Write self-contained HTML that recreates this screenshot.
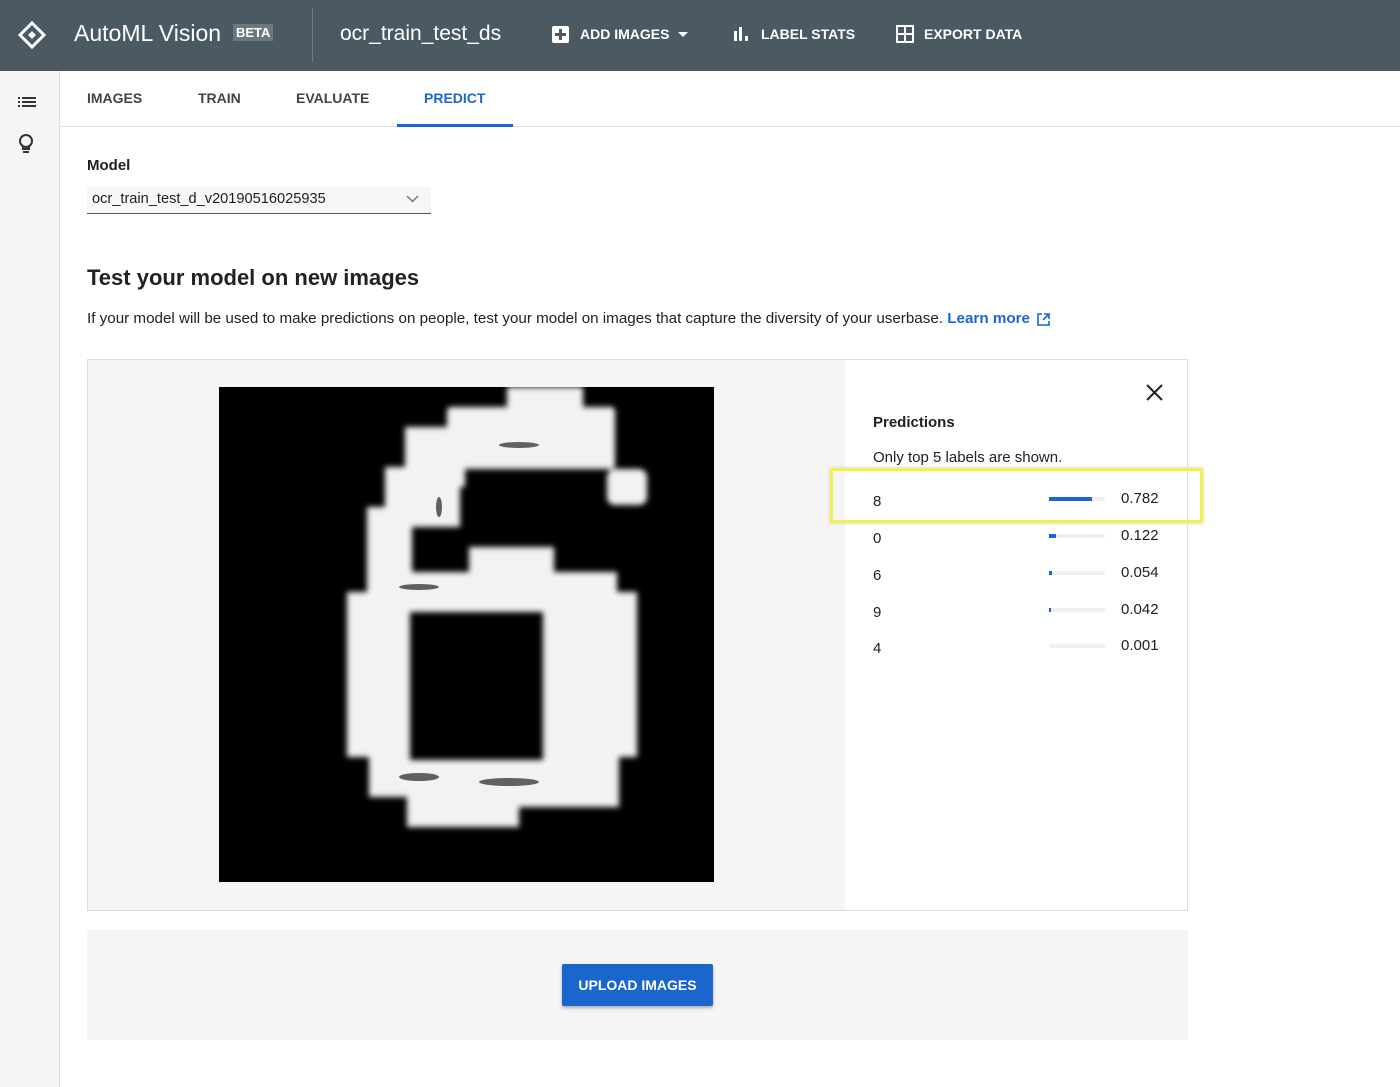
<!DOCTYPE html>
<html><head><meta charset="utf-8"><style>
*{margin:0;padding:0;box-sizing:border-box}
body{width:1400px;height:1087px;position:relative;background:#fff;font-family:"Liberation Sans",Arial,sans-serif;color:#212121;overflow:hidden}
.hdr{position:absolute;left:0;top:0;width:1400px;height:71px;background:#4b5962}
.hdr .t{position:absolute;color:#fff;white-space:nowrap}
.side{position:absolute;left:0;top:71px;width:60px;height:1016px;background:#f5f5f5;border-right:1px solid #e0e0e0}
.tabs{position:absolute;left:60px;top:71px;right:0;height:56px;border-bottom:1px solid #e0e0e0}
.tab{position:absolute;top:19px;font-size:14px;font-weight:bold;color:#444}
.abs{position:absolute;white-space:nowrap}
.row{position:absolute;left:873px;font-size:15px}
.bar{position:absolute;left:1049px;width:56px;height:4px;background:#f0f0f0}
.bar i{display:block;height:4px;background:#1a66cc}
.v{position:absolute;left:1121px;font-size:15px}
</style></head><body>
<div class="hdr">
 <svg style="position:absolute;left:17px;top:20px" width="30" height="30" viewBox="0 0 30 30"><path d="M15 3 L27 15 L15 27 L3 15 Z" fill="none" stroke="#fff" stroke-width="3"/><path d="M15 11 L19 15 L15 19 L11 15Z" fill="#fff"/></svg>
 <div class="t" style="left:74px;top:20px;font-size:23px">AutoML Vision</div>
 <div class="t" style="left:233px;top:24px;font-size:13px;font-weight:bold;background:#6b7880;padding:1px 3px">BETA</div>
 <div style="position:absolute;left:312px;top:8px;width:1px;height:54px;background:#6c7a82"></div>
 <div class="t" style="left:340px;top:22px;font-size:21px">ocr_train_test_ds</div>
 <div style="position:absolute;left:552px;top:26px;width:17px;height:17px;background:#fff;border-radius:2px"><div style="position:absolute;left:7px;top:3px;width:3px;height:11px;background:#4b5962"></div><div style="position:absolute;left:3px;top:7px;width:11px;height:3px;background:#4b5962"></div></div>
 <div class="t" style="left:580px;top:26px;font-size:14px;font-weight:bold">ADD IMAGES</div>
 <div style="position:absolute;left:678px;top:32px;border-left:5px solid transparent;border-right:5px solid transparent;border-top:5px solid #fff"></div>
 <div style="position:absolute;left:734px;top:31px;width:3px;height:10px;background:#fff"></div>
 <div style="position:absolute;left:739px;top:27px;width:3px;height:14px;background:#fff"></div>
 <div style="position:absolute;left:745px;top:36px;width:3px;height:5px;background:#fff"></div>
 <div class="t" style="left:761px;top:26px;font-size:14px;font-weight:bold">LABEL STATS</div>
 <svg style="position:absolute;left:896px;top:25px" width="18" height="18"><rect x="1" y="1" width="16" height="16" fill="none" stroke="#fff" stroke-width="2"/><path d="M9 1V17M1 9H17" stroke="#fff" stroke-width="2"/></svg>
 <div class="t" style="left:924px;top:26px;font-size:14px;font-weight:bold">EXPORT DATA</div>
</div>
<div class="side">
 <svg style="position:absolute;left:18px;top:25px" width="18" height="14"><g fill="#333"><rect x="0" y="1" width="2" height="2"/><rect x="4" y="1" width="14" height="2"/><rect x="0" y="5" width="2" height="2"/><rect x="4" y="5" width="14" height="2"/><rect x="0" y="9" width="2" height="2"/><rect x="4" y="9" width="14" height="2"/></g></svg>
 <svg style="position:absolute;left:18px;top:63px" width="16" height="22"><circle cx="8" cy="7" r="6" fill="none" stroke="#333" stroke-width="2"/><path d="M5 12V15H11V12" fill="none" stroke="#333" stroke-width="2"/><rect x="5" y="17" width="6" height="2" fill="#333"/></svg>
</div>
<div class="tabs">
 <div class="tab" style="left:27px">IMAGES</div>
 <div class="tab" style="left:138px">TRAIN</div>
 <div class="tab" style="left:236px">EVALUATE</div>
 <div class="tab" style="left:364px;color:#1a66cc">PREDICT</div>
 <div style="position:absolute;left:337px;top:53px;width:116px;height:3px;background:#1a66cc"></div>
</div>
<div class="abs" style="left:87px;top:157px;font-size:15px;font-weight:bold">Model</div>
<div class="abs" style="left:87px;top:187px;width:344px;height:27px;background:#f7f7f7;border-bottom:1px solid #555"></div>
<div class="abs" style="left:92px;top:191px;font-size:14.6px">ocr_train_test_d_v20190516025935</div>
<svg style="position:absolute;left:406px;top:195px" width="13" height="8"><path d="M1 1L6.5 6.5L12 1" fill="none" stroke="#777" stroke-width="1.5"/></svg>
<div class="abs" style="left:87px;top:265px;font-size:22px;font-weight:bold;color:#222">Test your model on new images</div>
<div class="abs" style="left:87px;top:310px;font-size:15.2px">If your model will be used to make predictions on people, test your model on images that capture the diversity of your userbase. <span style="color:#1a66cc;font-weight:bold">Learn more</span></div>
<svg style="position:absolute;left:1037px;top:313px" width="13" height="13"><path d="M5 1H1V12H12V8" fill="none" stroke="#1a66cc" stroke-width="1.6"/><path d="M7 1H12V6M12 1L6 7" fill="none" stroke="#1a66cc" stroke-width="1.6"/></svg>
<div class="abs" style="left:87px;top:359px;width:1101px;height:552px;border:1px solid #ddd;background:#f5f5f5"></div>
<div class="abs" style="left:845px;top:360px;width:342px;height:550px;background:#fff"></div>
<svg style="position:absolute;left:219px;top:387px" width="495" height="495">
 <defs><filter id="b"><feGaussianBlur stdDeviation="3"/></filter></defs>
 <rect width="495" height="495" fill="#000"/>
 <g fill="#f2f2f2" filter="url(#b)">
  <rect x="288" y="0" width="76" height="22"/>
  <rect x="228" y="20" width="168" height="62" rx="4"/>
  <rect x="186" y="40" width="60" height="60"/>
  <rect x="166" y="80" width="75" height="60"/>
  <rect x="148" y="120" width="45" height="80"/>
  <rect x="388" y="82" width="40" height="36" rx="8"/>
  <rect x="250" y="160" width="85" height="40"/>
  <rect x="148" y="185" width="250" height="40"/>
  <path fill-rule="evenodd" d="M128 205H418V370H400V420H300V440H188V410H150V370H128Z M191 222V373H324V222Z"/>
 </g>
 <g fill="#000" opacity="0.6"><ellipse cx="200" cy="200" rx="20" ry="3"/><ellipse cx="220" cy="120" rx="3" ry="10"/><ellipse cx="300" cy="58" rx="20" ry="3"/><ellipse cx="200" cy="390" rx="20" ry="4"/><ellipse cx="290" cy="395" rx="30" ry="4"/></g>
</svg>
<svg style="position:absolute;left:1146px;top:384px" width="17" height="17"><path d="M1 1L16 16M16 1L1 16" stroke="#222" stroke-width="2"/></svg>
<div class="abs" style="left:873px;top:414px;font-size:15px;font-weight:bold">Predictions</div>
<div class="abs" style="left:873px;top:449px;font-size:15px">Only top 5 labels are shown.</div>
<div class="row" style="top:493px">8</div><div class="bar" style="top:497px"><i style="width:43px"></i></div><div class="v" style="top:490px">0.782</div>
<div class="row" style="top:530px">0</div><div class="bar" style="top:534px"><i style="width:7px"></i></div><div class="v" style="top:527px">0.122</div>
<div class="row" style="top:567px">6</div><div class="bar" style="top:571px"><i style="width:3px"></i></div><div class="v" style="top:564px">0.054</div>
<div class="row" style="top:604px">9</div><div class="bar" style="top:608px"><i style="width:2px"></i></div><div class="v" style="top:601px">0.042</div>
<div class="row" style="top:640px">4</div><div class="bar" style="top:644px"><i style="width:0"></i></div><div class="v" style="top:637px">0.001</div>
<div class="abs" style="left:830px;top:468px;width:373px;height:55px;border:3px solid #f2f24a;box-shadow:0 0 3px #ccc"></div>
<div class="abs" style="left:87px;top:930px;width:1101px;height:110px;background:#f5f5f5"></div>
<div class="abs" style="left:562px;top:964px;width:151px;height:42px;background:#1a66cc;border-radius:2px;box-shadow:0 2px 3px rgba(0,0,0,.3);color:#fff;font-size:14px;font-weight:bold;text-align:center;line-height:42px">UPLOAD IMAGES</div>
</body></html>
